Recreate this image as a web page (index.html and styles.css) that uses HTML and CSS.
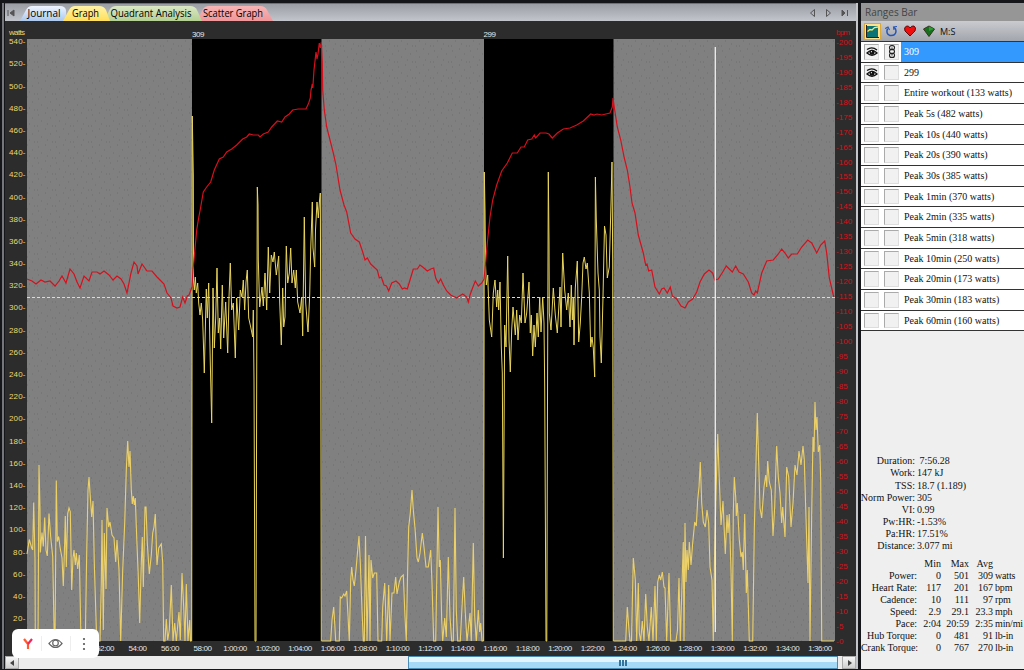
FILE: index.html
```html
<!DOCTYPE html>
<html lang="en">
<head>
    <meta charset="UTF-8">
    <meta name="viewport" content="width=device-width, initial-scale=1.0">
    <title>Workout Graph</title>
    <link rel="stylesheet" href="styles.css">
</head>
<body>

<div class="app">
    <main class="graph-pane">
        <nav class="tabs">
            <svg class="nav-first" width="8" height="8" viewBox="0 0 8 8"><path d="M1 1V7M7 1L3 4L7 7Z" fill="#555" stroke="#555"/></svg>
            <svg class="tab-shapes" width="256" height="15" viewBox="0 0 256 15">
                <defs>
                    <linearGradient id="blue" x2="0" y2="1"><stop stop-color="#f0f5ff"/><stop offset="1" stop-color="#abc8ee"/></linearGradient>
                    <linearGradient id="yellow" x2="0" y2="1"><stop stop-color="#fff3a8"/><stop offset="1" stop-color="#ffdf5a"/></linearGradient>
                    <linearGradient id="green" x2="0" y2="1"><stop stop-color="#dbe8c4"/><stop offset="1" stop-color="#b4d094"/></linearGradient>
                    <linearGradient id="red" x2="0" y2="1"><stop stop-color="#f8b4b4"/><stop offset="1" stop-color="#f0979b"/></linearGradient>
                </defs>
                <path d="M178 15L184 3Q186 0 190 0H241Q246 0 248 4L254 15Z" fill="url(#red)"/>
                <path d="M85 15L91 3Q93 0 97 0H171Q176 0 178 4L183 15Z" fill="url(#green)"/>
                <path d="M1 15L7 4Q9 0 13 0H41Q46 0 47 4V15Z" fill="url(#blue)"/>
                <path d="M44 15L50 4Q52 0 56 0H80Q85 0 87 4L91 15Z" fill="url(#yellow)"/>
                <text x="8.500" y="11" textLength="33" lengthAdjust="spacingAndGlyphs">Journal</text>
                <text x="53" y="11" textLength="27" lengthAdjust="spacingAndGlyphs">Graph</text>
                <text x="91.500" y="11" textLength="81" lengthAdjust="spacingAndGlyphs">Quadrant Analysis</text>
                <text x="184" y="11" textLength="60" lengthAdjust="spacingAndGlyphs">Scatter Graph</text>
            </svg>
            <svg class="nav-right" width="40" height="10" viewBox="0 0 40 10" fill="none" stroke="#555"><path d="M5.5 1.500V8.500L1.500 5ZM17.500 1.500V8.500L21.500 5Z"/><path d="M33 2L36 5L33 8ZM38.500 2V8" fill="#555"/></svg>
        </nav>

        <svg class="chart" width="851" height="635" viewBox="5 21 851 635">
            <defs>
                <pattern id="dots" width="18" height="16" patternUnits="userSpaceOnUse">
                    <path d="M2 3h1M9 1h1M14 6h1M5 9h1M11 12h1M16 14h1M1 14h1" stroke="#5c5c5c" stroke-opacity=".55"/>
                </pattern>
            </defs>
            <rect x="27" y="39" width="808" height="602" fill="#808080"/>
            <rect x="27" y="39" width="808" height="602" fill="url(#dots)"/>
            <rect x="192" y="39" width="129.500" height="602"/>
            <rect x="484" y="39" width="129.500" height="602"/>

            <g class="range-name">
                <text x="192" y="36.500" textLength="12.500">309</text>
                <text x="483.500" y="36.500" textLength="12.500">299</text>
            </g>

            <!-- power: rest periods -->
            <g class="power rest">
                <polyline points="27,554 29.3,539.5 31.7,548 32.7,550 33.7,502.5 35,560 35.3,641 38,641 39,465 40,510 40.3,552.5 42,532.5 43.3,546.5 44.700,517.5 46,550 47.3,556 49,513.5 50.7,537 52.7,556.5 54.3,641 55,641 56.300,480.5 57.3,541.5 58.7,536.5 60,547 62,558 63.3,586 64.7,541.5 65.3,516 66.3,567 67.7,513.5 69,508 70.3,511.5 71.7,590 73,558 74,550 75.3,565 76.3,553 77.7,569 79.3,555 81,641 85.3,641 86.7,553 88,490 89,477 90.3,497 91.7,517 93,501 94.3,563 96.7,641 100,641 101.3,583 102,520 103.3,630 104.3,533 106,589 107,508 108.7,527 110,522 112,535 114,538 115.7,562 117,540 119,570 120.7,641 122.7,570 124.7,523 126.3,470 127.7,441 129,467 130,451 131.3,490 132.3,504 133.3,496 134.3,505 135.3,498 136.3,527 138.3,577 139.7,623 141.3,563 142.3,537 143.3,587 145,507 146,507 147.3,543 149.3,574 151.3,555 152.7,533 154,527 155.3,514 157,565 158.7,548 161.3,544 162.7,563 163.7,641 165,641 166.3,619 167.7,640 169.3,630 171.3,585 173,641 174.7,623 176.3,641 179,612 180.3,640 182,573 183.7,607 185,641 186.3,584 188,641 189.7,620 190.5,641 191.5,641"/>
                <polyline points="321.5,641 330.7,641 332,620 333.7,607 334.7,623 335.7,641 339.3,641 340.3,597 341.7,598 343.7,594 345,596 346.7,591 347.7,610 349.3,641 350.7,580 351.7,567 353,580 354.3,586 356,570 357.7,550 359,536 360.3,563 362,610 363.3,641 364.3,641 365.5,536 367,641 369,555 370,641 371,560 372.7,578 374.3,573 376.7,573 378,641 381.7,641 382.7,607 384.7,583 386.7,641 388.7,585 390,641 392,593 394,593 395.7,577 397,594 399.3,582 401,577 403.3,575 405,617 406.3,641 407.7,567 408.7,527 410.3,513 412,490 413.3,510 415,528 417,558 418.3,562 420,553 422.3,533 424.3,550 426,567 428.3,567 430.7,550 432,583 433.7,641 435.7,641 438,507 439.3,567 440.3,560 441.7,620 442.7,641 444.7,618 446.3,637 448.3,557 450,617 451.7,641 453.3,641 455,508 456.3,610 457.7,641 460.3,641 462,607 463.7,577 465.3,613 467,641 470,613 471.3,641 473.3,543 474.7,617 476.3,641 478.3,610 479.7,632 480.7,623 482,641 483.5,641"/>
                <polyline points="613.5,641 625.7,641 627.3,607 629,630 630,641 631.5,641 633.3,558 635.3,580 636.7,641 638.3,583 639.3,633 640.7,641 642.3,621 644,641 645.7,594 647.3,627 649,641 651.3,607 653,641 655,586 656.3,641 657.7,582 659.3,575 660.7,580 662.3,572 664,587 665,588 666.7,641 669,573 670.7,641 676,641 677.5,630 679,578 680.3,641 683.3,542 684,641 685,523 686,582 687,550 688.3,570 689.3,542 691,565 692.7,543 694.7,522 696.3,526 697.7,500 699,487 700.3,462 701.7,503 703.3,522 705.3,527 707,510 708.7,523 710,567 712,580 713.3,641 714.7,548 716,493 717.7,434 719.3,480 721,525 723,501 725.3,554 727,515 728,533 729.3,514 731,570 732.3,641 733.3,513 734.3,477 735.7,497 736.3,516 737.3,503 739.3,540 741,557 742.3,552 743.3,570 744.7,514 746.3,593 747.3,570 749.3,641 752.7,641 754.3,530 756,463 757.3,413 758.7,463 760,508 761.7,518 764,487 765.7,475 766.7,487 767.7,461 769.3,482 771.3,490 773,536 774.7,507 775.7,473 776.7,446 778.3,477 780,493 781.7,523 782.7,507 785,537 786.7,467 788.7,477 791,527 793,503 795,465 797,475 799,451 801,465 803,446 804.3,460 806,518 808,583 809,507 810,641 811.7,513 813,437 814,452 815,402 816,430 817,417 818.3,452 819.7,445 820.7,480 821.7,641 834,641"/>
            </g>

            <line x1="27" x2="835" y1="297.500" y2="297.500" class="threshold"/>

            <!-- power: the two selected ranges -->
            <g class="power">
                <polyline points="191.7,641 192.3,116 193.3,176 193.5,280 194.3,290 195.3,277 196.3,293 197.7,283 198.7,303 200,315 201.3,303 202.7,320 204.3,373 205.3,330 206.3,289 207.3,318 208.7,283 210.3,363 211.7,423 213,288 214.3,348 215.7,318 217,268 218.3,333 219.7,318 220.7,349 222.3,285 223.7,338 225.7,302 227.7,353 229,297 230.3,263 231.7,310 233.3,303 235.3,358 236.7,298 238.7,330 240.3,290 242,297 243.3,280 244.7,310 246,282 247.3,270 248.7,318 250.7,327 252.7,337 253.3,310 254,380 255,641 256,641 256.7,380 257.3,187 258,205 258.3,260 259.7,307 262,287 263.3,306 265,273 266.7,310 268.3,247 269.7,293 271.3,255 273,262 274.3,252 276.3,275 278.7,256 279.7,302 281.3,345 282.7,288 283.7,327 285,317 286.3,246 287.7,283 289.3,273 290.7,248 292,283 293.7,270 295.3,288 296.3,270 297.7,302 300,313 301.7,297 302.7,336 304.3,217 305,262 305.7,303 308,332 309.7,295 310.7,250 312.3,202 313,248 314.7,267 315.5,230 317,202 318.3,218 319.3,203 320.300,193 320.6,270 321.300,641"/>
                <polyline points="483.7,641 484.3,172 485,210 485.5,263 486.3,285 487.7,275 489.3,320 491.7,337 493.3,293 495,280 496.7,307 497.7,290 498.7,310 500,282 501.3,347 502.3,373 503.4,558 504,440 504.7,325 506,347 507.7,256 509,340 510.3,372 511.7,330 513,307 515.3,335 516.7,310 518,340 519.7,315 521.3,323 523,273 525,323 526.7,313 529,282 530.3,333 531.3,315 532.7,356 534,325 535.3,347 537,313 538.3,337 539.7,297 541,332 542.7,297 544,323 544.7,387 546,641 546.8,641 547.5,400 548.3,172 549,242 549.3,313 551,330 553.3,288 555.3,315 557.3,333 560,287 561,327 562.7,253 564.7,290 566.7,310 568.3,293 570,327 571.3,285 572.3,320 573.3,297 574,345 575.3,288 577.3,261 578.7,342 580.3,323 581.7,297 583,263 584.3,257 586,269 587.3,263 589.3,293 590.7,347 592,337 593.3,348 594.7,377 595.4,177 596.3,220 598,273 599.3,290 600,337 601.3,363 603,297 604.5,226 606,235 607.3,278 609.3,267 611,203 612,162 612.7,263 613.3,641"/>
            </g>

            <polyline class="heart-rate" points="27,279 32,281 36,284 41,280 45,282 50,281 55,286 59,281 62,276 66,283 70,269 74,274 77,282 80,288 84,276 89,281 92,272 97,272 100,274 104,271 109,275 113,280 117,276 121,279 124,284 127,293 131,273 134,262 137,266 138,274 142,264 147,271 152,271 157,277 161,281 164,284 167,293 171,298 173,306 177,308 180,307 182.7,297 185,303 187.3,296 189,295 192,287 193,270 194,260 196.7,230 198.3,220 200.7,207 203.3,192 206.7,187 210.7,182 214.3,170 219.3,159 223.3,157 226.7,152 231.7,149 236.7,145 242.7,139 246.7,137 249.3,134 253.3,135 258.3,135 260,137 263.3,134 268.3,132 271.7,127 277.3,121 281.7,122 285,117 289.3,114 292.7,110 298.3,109 306,109 308.7,103 310.3,98 311,90 312.300,84 312.8,88 314,70 316,52 317,59 318,54 319.3,43 320.3,48 321.3,42 322.3,63 322.7,90 324.3,110 326.7,127 330,140 333.3,153 336,165 340,190 344,205 346.7,212 350.7,233 355,239 359.3,242 362.7,252 365,260 367.3,258 370.7,264 375,268 377.3,270 379.3,278 381.3,277 384,285 386.5,286 388.7,291 391.7,283 396,281 399.3,284 402.3,289 404.5,288 407.3,289 410,280 413.3,269 417.3,269 420,265 422.7,267 427.3,271 430.7,269 433.7,268 435.7,278 438.3,283 440.7,279 443.3,285 446.7,291 450.7,295 456.7,298 459.5,296 462.7,294 466.7,297 468.3,302 470,295 473.3,286 475.3,281 478.3,286 481.7,283 484,279 485,270 487.3,243 490,217 492.7,200 496.7,185 501.7,171 507.3,163 512.3,153 517.3,153 521,147 524.3,147 527.7,140 531.7,139 534.3,135 535.7,138 540,133 546,133 549,134 552.3,138 557.3,133 563.3,129 570,128 576.7,125 583.3,121 590.7,114 594,115 597,114 601.7,115 610,113 612.3,107 613,98 614.7,110 617.3,127 620.7,140 624.3,158 627.3,170 630,187 632,203 635,213 638.3,235 643.3,253 645.7,265 647,264 648.7,271 651.7,270 655,287 659.3,294 661.7,289 664,288 667.3,293 670.3,287 672.3,296 676.7,299 681,306 685,308 688.3,302 692.7,299 696.7,292 700,282 704.3,274 709,270 712.7,273 714.7,280 718.3,279 722.7,272 726.3,266 732.3,272 735.7,266 739,272 743.3,274 748.3,282 751.7,293 754,295 755.7,291 757.3,293 761.7,273 766.7,261 773.3,260 778.3,254 781.7,249 785,253 788.3,258 791.7,254 797.3,254 801.7,247 807.7,240 811.7,243 816.7,253 820.7,245 824.7,241 826.7,253 829.3,278 833.3,295 834,297"/>

            <line class="cursor" x1="715.300" x2="715.300" y1="47" y2="632"/>

            <g id="watts-axis" class="watts"><text x="25" y="35" textLength="16">watts</text></g>
            <g id="bpm-axis" class="bpm"><text x="836" y="35" textLength="14">bpm</text></g>
            <g id="time-axis" class="time"></g>
        </svg>

        <div class="scrollbar">
            <span class="scroll-button"><svg width="5" height="6" viewBox="0 0 5 6"><path d="M4 0V6L0 3Z" fill="#444"/></svg></span>
            <span class="scroll-thumb"><i></i><i></i><i></i></span>
            <span class="scroll-button"><svg width="5" height="6" viewBox="0 0 5 6"><path d="M1 0V6L5 3Z" fill="#444"/></svg></span>
        </div>
    </main>

    <aside class="ranges">
        <h1>Ranges Bar</h1>
        <div class="toolbar">
            <span class="tool active"><svg width="13" height="13" viewBox="0 0 13 13"><path d="M1 1H12V12H1Z" fill="#0a7375"/><path d="M.5 0V12.500H13" fill="none" stroke="#222"/><path d="M1.500 6.500L4 4.500L6 5L8.500 2.500L12 2" fill="none" stroke="#f6e96a" stroke-width="1.300"/></svg></span>
            <svg width="13" height="12" viewBox="0 0 13 12" fill="none" stroke="#2455b5" stroke-width="1.500"><path d="M2.500 3.500Q.500 9 5 10.500Q11 11 11 6Q11 3.500 9 2.500"/><path d="M0 3.500L3 2L4.500 5M12 1.500L8.500 2L9 5" stroke-width="1.100"/></svg>
            <svg width="12" height="12" viewBox="0 0 12 12"><path d="M6 11L1 6Q-.5 2.500 2.500 1Q5 .5 6 3Q7.500 .5 10 1Q12.500 2.500 11 6Z" fill="#f20d0d" stroke="#5b0c0c"/></svg>
            <svg width="12" height="12" viewBox="0 0 12 12"><path d="M.5 4L6 1L11.500 4L6 11.500Z" fill="#186f1d" stroke="#383520"/><path d="M6 1.500L11 4L6 6Z" fill="#2b9d32"/></svg>
            <span class="units">M:S</span>
        </div>

        <svg class="symbols" width="0" height="0">
            <symbol id="eye" viewBox="0 0 12 10">
                <path d="M1 2.500Q6-1 11 3M1 6Q6 1 11 6Q6 10.500 1 6Z" fill="none" stroke="#111" stroke-width="1.300"/>
                <circle cx="6" cy="5.300" r="2.500" fill="#111"/><circle cx="5.400" cy="4.700" r=".6" fill="#fff"/>
            </symbol>
            <symbol id="chain" viewBox="0 0 8 13">
                <g fill="none" stroke="#222" stroke-width="1.100"><rect x="1.500" y=".6" width="5" height="4.200" rx="2"/><rect x="1.500" y="4.500" width="5" height="4" rx="2"/><rect x="1.500" y="8.200" width="5" height="4.200" rx="2"/><path d="M4 2.500V4.500M4 8V10.500"/></g>
            </symbol>
        </svg>
        <ul class="range-list">
            <li class="selected"><span class="box"><svg width="12" height="10"><use href="#eye"/></svg></span><span class="box"><svg width="8" height="13"><use href="#chain"/></svg></span><b>309</b></li>
            <li><span class="box"><svg width="12" height="10"><use href="#eye"/></svg></span><span class="box"></span><b>299</b></li>
            <li><span class="box"></span><span class="box"></span><b>Entire workout (133 watts)</b></li>
            <li><span class="box"></span><span class="box"></span><b>Peak 5s (482 watts)</b></li>
            <li><span class="box"></span><span class="box"></span><b>Peak 10s (440 watts)</b></li>
            <li><span class="box"></span><span class="box"></span><b>Peak 20s (390 watts)</b></li>
            <li><span class="box"></span><span class="box"></span><b>Peak 30s (385 watts)</b></li>
            <li><span class="box"></span><span class="box"></span><b>Peak 1min (370 watts)</b></li>
            <li><span class="box"></span><span class="box"></span><b>Peak 2min (335 watts)</b></li>
            <li><span class="box"></span><span class="box"></span><b>Peak 5min (318 watts)</b></li>
            <li><span class="box"></span><span class="box"></span><b>Peak 10min (250 watts)</b></li>
            <li><span class="box"></span><span class="box"></span><b>Peak 20min (173 watts)</b></li>
            <li><span class="box"></span><span class="box"></span><b>Peak 30min (183 watts)</b></li>
            <li><span class="box"></span><span class="box"></span><b>Peak 60min (160 watts)</b></li>
        </ul>

        <dl class="summary">
            <dt>Duration:</dt><dd>&nbsp;7:56.28</dd>
            <dt>Work:</dt><dd>147 kJ</dd>
            <dt>TSS:</dt><dd>18.7 (1.189)</dd>
            <dt>Norm Power:</dt><dd>305</dd>
            <dt>VI:</dt><dd>0.99</dd>
            <dt>Pw:HR:</dt><dd>-1.53%</dd>
            <dt>Pa:HR:</dt><dd>17.51%</dd>
            <dt>Distance:</dt><dd>3.077 mi</dd>
        </dl>
        <table class="stats">
            <tr><th></th><td>Min</td><td>Max</td><td>Avg</td><td></td></tr>
            <tr><th>Power:</th><td>0</td><td>501</td><td>309</td><td>watts</td></tr>
            <tr><th>Heart Rate:</th><td>117</td><td>201</td><td>167</td><td>bpm</td></tr>
            <tr><th>Cadence:</th><td>10</td><td>111</td><td>97</td><td>rpm</td></tr>
            <tr><th>Speed:</th><td>2.9</td><td>29.1</td><td>23.3</td><td>mph</td></tr>
            <tr><th>Pace:</th><td>2:04</td><td>20:59</td><td>2:35</td><td>min/mi</td></tr>
            <tr><th>Hub Torque:</th><td>0</td><td>481</td><td>91</td><td>lb-in</td></tr>
            <tr><th>Crank Torque:</th><td>0</td><td>767</td><td>270</td><td>lb-in</td></tr>
        </table>
    </aside>
</div>

<div class="browser-menu">
    <span><svg width="12" height="12" viewBox="0 0 12 12" fill="none" stroke-width="2.200"><path d="M2 1L6 6V11" stroke="#ff5b2e"/><path d="M10 1L6 6" stroke="#f0285a"/></svg></span>
    <span><svg width="15" height="11" viewBox="0 0 15 11" fill="none" stroke="#666" stroke-width="1.200"><path d="M1 5.500Q7.500-2.500 14 5.500Q7.500 13.500 1 5.500Z"/><circle cx="7.500" cy="5" r="2.800"/></svg></span>
    <span><svg width="4" height="14" viewBox="0 0 4 14" fill="#555"><circle cx="2" cy="2" r="1.100"/><circle cx="2" cy="7" r="1.100"/><circle cx="2" cy="12" r="1.100"/></svg></span>
</div>

<script>
    function addLabel(group, x, y, width, label) {
        const text = document.createElementNS('http://www.w3.org/2000/svg', 'text');
        text.setAttribute('x', x);
        text.setAttribute('y', y);
        text.setAttribute('textLength', width);
        text.textContent = label;
        document.getElementById(group).appendChild(text);
    }

    for (let w = 20; w <= 540; w += 20) {
        addLabel('watts-axis', 25.5, 643.3 - w * 1.1095, w < 100 ? 12.5 : 16.5, `${w}-`);
    }

    for (let b = 0; b <= 200; b += 5) {
        addLabel('bpm-axis', 836, 643.7 - b * 2.995, 3 + 4.4 * String(b).length, `-${b}`);
    }

    for (let i = 0; i <= 22; i++) {
        const minutes = 52 + i * 2;
        const long = minutes >= 60;
        const label = long ? `1:${String(minutes - 60).padStart(2, '0')}:00` : `${minutes}:00`;
        addLabel('time-axis', 105.3 + i * 32.5, 651, long ? 24 : 18.5, label);
    }
</script>

</body>
</html>
```
FILE: styles.css
```css
body {
    margin: 0;
    width: 1024px;
    height: 670px;
    overflow: hidden;
    background-color: #15161a;
    font-family: "Liberation Sans", sans-serif;
}

.app {
    display: flex;
    box-sizing: border-box;
    height: 670px;
    padding: 3px 0 1px 2px;
}

.graph-pane {
    display: flex;
    flex-direction: column;
    box-sizing: border-box;
    width: 856px;
    border-left: 2px solid #74767c;
    border-right: 2px solid #c4c5ca;
    padding-left: 1px;
}

.tabs {
    display: flex;
    align-items: center;
    box-sizing: border-box;
    height: 18px;
    background: linear-gradient(#9b9da5, #c3c5cd);
    border-top: 1px solid #6d7078;
}

.nav-first {
    margin-left: 2px;
}

.tab-shapes {
    align-self: flex-end;
    margin-left: 4px;
    font-family: "Open Sans", "Noto Sans", sans-serif;
    font-size: 10px;
}

.nav-right {
    margin-left: auto;
    margin-right: 7px;
}

.chart {
    display: block;
    flex: none;
    background-color: #2c2c2c;
    font-size: 8px;
}

.power {
    fill: none;
    stroke: #e9d55c;
    stroke-width: 1;
}

.rest {
    stroke: #ecd067;
    stroke-width: 1.100;
}

.heart-rate {
    fill: none;
    stroke: #d5101c;
    stroke-width: 1.200;
}

.threshold {
    stroke: #ebe38a;
    stroke-dasharray: 3 2;
}

.cursor {
    stroke: #eee;
    stroke-width: 1.300;
}

.range-name,
.time {
    fill: #e6e6e6;
}

.time {
    text-anchor: middle;
}

.watts {
    fill: #ecd96c;
    text-anchor: end;
}

.bpm {
    fill: #d51219;
}

.scrollbar {
    display: flex;
    align-items: stretch;
    box-sizing: border-box;
    height: 13px;
    background-color: #ececec;
}

.scroll-button {
    display: flex;
    align-items: center;
    justify-content: center;
    width: 12px;
    border: 1px solid #aaa;
    background: linear-gradient(#f6f6f6, #cfcfcf);
}

.scroll-thumb {
    display: flex;
    align-items: center;
    justify-content: center;
    gap: 1px;
    box-sizing: border-box;
    width: 430px;
    margin-left: auto;
    margin-right: 4px;
    border: 1px solid #4b8db5;
    background: linear-gradient(#e2f4fd 45%, #a5d9f5 50%);
}

.scroll-thumb i {
    width: 2px;
    height: 6px;
    background-color: #34759e;
}

.ranges {
    flex: none;
    width: 163px;
    margin-left: 3px;
    overflow: hidden;
    background-color: #efefef;
    font-family: "Liberation Serif", serif;
    font-size: 10px;
    color: #111;
}

.ranges h1 {
    height: 18px;
    margin: 0;
    padding-left: 4px;
    background-color: #969696;
    color: #444;
    font: 10px/19px "Open Sans", sans-serif;
}

.toolbar {
    display: flex;
    align-items: center;
    gap: 6.500px;
    box-sizing: border-box;
    height: 20px;
    padding-left: 3px;
    background: linear-gradient(#c9cbd1, #a3a5ac);
}

.tool {
    padding: 1px;
    height: 13px;
    margin-right: -3px;
    border: 1px solid #d8a93d;
    background-color: #ffe08b;
}

.units {
    margin-left: -1px;
    font: 9px "Open Sans", sans-serif;
}

.symbols {
    position: absolute;
}

.range-list {
    margin: 0;
    padding: 0;
    list-style: none;
    border-top: 1px solid #333;
}

.range-list li {
    display: flex;
    align-items: stretch;
    box-sizing: border-box;
    height: 20.680px;
    border-bottom: 1px solid #333;
    background-color: #fff;
}

.box {
    display: flex;
    align-items: center;
    justify-content: center;
    box-sizing: border-box;
    width: 15px;
    margin: 2px 2px 2px 3px;
    border: 1px solid #aaa;
    border-right-color: #ddd;
    border-bottom-color: #ddd;
    background-color: #f1f1f1;
}

.range-list b {
    flex: 1;
    padding-left: 3px;
    font-weight: normal;
    line-height: 20px;
    white-space: nowrap;
}

.range-list .selected b {
    background-color: #3399ff;
    color: #fff;
}

.summary {
    display: grid;
    grid-template-columns: 54px 1fr;
    column-gap: 2px;
    margin: 124px 0 0;
    line-height: 12.070px;
    white-space: nowrap;
}

.summary dt {
    justify-self: end;
}

.summary dd {
    margin: 0;
}

.stats {
    table-layout: fixed;
    width: 163px;
    margin-top: 6px;
    border-collapse: collapse;
    line-height: 12.070px;
    white-space: nowrap;
}

.stats th,
.stats td {
    width: 28px;
    padding: 0;
    font-weight: normal;
    text-align: right;
}

.stats th {
    width: 56px;
    letter-spacing: -0.05px;
}

.stats td:nth-child(2) {
    width: 24px;
}

.stats td:nth-child(4) {
    width: 24px;
}

.stats td:last-child {
    width: 31px;
    padding-left: 2px;
    text-align: left;
    letter-spacing: -0.15px;
}

/* floating toolbar over the lower left corner */
.browser-menu {
    position: absolute;
    left: 12px;
    top: 629px;
    display: flex;
    align-items: center;
    box-sizing: border-box;
    width: 87px;
    height: 29px;
    padding: 0 1px 0 2px;
    border-radius: 6px;
    background-color: #fff;
}

.browser-menu span {
    display: flex;
    flex: 1;
    align-items: center;
    justify-content: center;
    height: 15px;
}

.browser-menu span + span {
    border-left: 1px solid #eee;
}
```
